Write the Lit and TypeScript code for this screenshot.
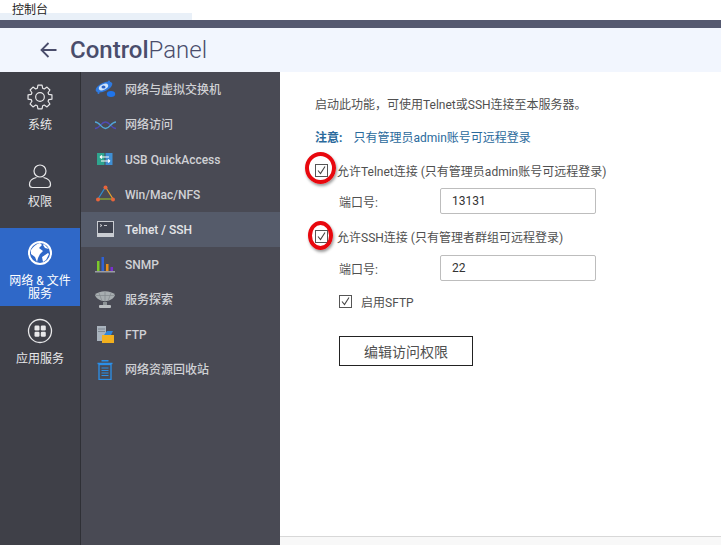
import { LitElement, html, css, svg } from "lit";
import { customElement } from "lit/decorators.js";

const menuIcons: Record<string, unknown> = {
  vswitch: svg`<ellipse cx="9" cy="7" rx="9" ry="4.200" fill="#2f7ae0" transform="rotate(-26 9 7)"/><ellipse cx="8.500" cy="7" rx="5" ry="2.800" fill="#cfe4fb" transform="rotate(-26 8.500 7)"/><ellipse cx="8.500" cy="7" rx="2" ry="1.500" fill="#2a62c8"/><circle cx="14" cy="1.500" r="1" fill="#2f7ae0"/><circle cx="3.500" cy="13" r="1" fill="#2f7ae0"/><ellipse cx="16" cy="14" rx="4.200" ry="3" fill="#1f74ea"/>`,
  access: svg`<path d="M0 13.500C5 13.500 6 7 10.500 7S16 13.500 21 13.500" fill="none" stroke="#4f4bb5" stroke-width="1.400"/><path d="M0 7C5 7 6 13.500 10.500 13.500S16 7 21 7" fill="none" stroke="#52a7d8" stroke-width="1.400"/>`,
  usb: svg`<rect x="2" y="3" width="7.500" height="12" fill="#2fa58f"/><rect x="10.500" y="3" width="7" height="12" fill="#3f8fd4"/><path d="M5 7h9M5 7l2-1.500M5 7l2 1.500M15 11H6M15 11l-2-1.500M15 11l-2 1.500" stroke="#fff" stroke-width="1.200" fill="none"/>`,
  nfs: svg`<path d="M10.500 2 3 14" stroke="#2f8fd0" stroke-width="1.200"/><path d="M10.500 2 18 14" stroke="#e8a02e" stroke-width="1.200"/><path d="M3 14H18" stroke="#8fb52f" stroke-width="1.200"/><circle cx="10.500" cy="2.500" r="2" fill="#e8643c"/><circle cx="3" cy="14.500" r="2" fill="#e8643c"/><circle cx="18" cy="14.500" r="2" fill="#e8643c"/>`,
  telnet: svg`<rect x="2.500" y="1.500" width="16" height="15" fill="#3f4350" stroke="#c9ccd2"/><rect x="2" y="13" width="17" height="4" fill="#c9ccd2"/><path d="M5 4.500 7 5.500 5 6.500M9 5.500h3" stroke="#e4e6ea" fill="none" stroke-width=".8"/>`,
  snmp: svg`<rect x="0" y="16" width="20" height="1.500" fill="#9a9ca3"/><rect x="2" y="6" width="2.500" height="10" fill="#7cc92c"/><rect x="6.500" y="2" width="2.500" height="14" fill="#2f62d8"/><rect x="11" y="9" width="2.500" height="7" fill="#e88f1a"/><rect x="15.500" y="12" width="2.500" height="4" fill="#7a2fd0"/>`,
  discovery: svg`<path d="M0 5C4 0 16 0 20 5 17 13 3 13 0 5Z" fill="#a7adb0"/><path d="M4 3 7 11M10 1.500V12M16 3 13 11M1 5.500H19" stroke="#82888c" stroke-width=".7"/><rect x="8" y="12" width="4" height="3" fill="#8d9396"/><rect x="4" y="15" width="12" height="3" rx="1" fill="#b9bdc0"/>`,
  ftp: svg`<rect x="2" y="1" width="9" height="15" fill="#a9b3bd"/><path d="M3 4h7M3 6.500h7" stroke="#78828c" stroke-width=".9"/><path d="M7 10H19V18H7Z" fill="#f2b01e"/><path d="M9 10 12 6h6l-2 4Z" fill="#2f86dc"/>`,
  recycle: svg`<path d="M6.500 .8h7M2.500 3.500h15" stroke="#2b8fe8" stroke-width="1.400" fill="none"/><rect x="4" y="4.500" width="12" height="15" fill="none" stroke="#2b8fe8" stroke-width="1.300"/><path d="M6.500 8h7M6.500 10.500h7M6.500 13h7M6.500 15.500h7" stroke="#2b8fe8"/>`,
};

const menu: [string, string, boolean?][] = [
  ["vswitch", "网络与虚拟交换机"],
  ["access", "网络访问"],
  ["usb", "USB QuickAccess"],
  ["nfs", "Win/Mac/NFS"],
  ["telnet", "Telnet / SSH", true],
  ["snmp", "SNMP"],
  ["discovery", "服务探索"],
  ["ftp", "FTP"],
  ["recycle", "网络资源回收站"],
];

const gearPath = (() => {
  const c = 12;
  const teeth = 8;
  const pts: string[] = [];
  for (let i = 0; i < teeth; i++) {
    const a = (i * 2 * Math.PI) / teeth;
    for (const [r, d] of [[8.4, -0.3], [11.2, -0.17], [11.2, 0.17], [8.4, 0.3]] as const) {
      pts.push(`${(c + r * Math.sin(a + d)).toFixed(2)} ${(c - r * Math.cos(a + d)).toFixed(2)}`);
    }
  }
  return `M${pts.join("L")}Z`;
})();

const check = html`<svg class="check" viewBox="0 0 13 13" width="13" height="13"><rect x=".5" y=".5" width="12" height="12" fill="#fff" stroke="#555"/><path d="M3 6.500 5.500 9.500 10 2.500" fill="none" stroke="#444" stroke-width="1.100"/></svg>`;

@customElement("app-root")
export class AppRoot extends LitElement {
  static styles = css`
    :host { display: block; width: 721px; height: 545px; overflow: hidden; position: relative; background: #fff;
      font-family: Roboto, "Noto Sans CJK SC", sans-serif; font-size: 12px; color: #505050; }
    .page { display: flex; flex-direction: column; height: 545px; }
    .tab { height: 20px; position: relative; background: #fff; color: #222; padding-left: 12px; line-height: 20px; font-size: 12px; }
    .tabstrip { position: absolute; left: 0; top: 13px; width: 192px; height: 7px; background: #e9f0f8; z-index: 0; }
    .tabtext { position: relative; z-index: 1; }
    .band { height: 8px; background: #555970; }
    .head { height: 44px; background: #f2f6fe; display: flex; align-items: center; padding-left: 40px; gap: 13px; color: #4a4d6c; font-size: 24px; }
    .head b { font-weight: 500; }
    .head span { font-weight: 300; }
    .main { flex: 1; display: flex; min-height: 0; }
    .rail { width: 80px; background: #3f4048; border-right: 1px solid #2f3036; color: #e8e8ea; display: flex; flex-direction: column; padding-top: 12px; }
    .ritem { display: flex; flex-direction: column; align-items: center; text-align: center; font-size: 12px; line-height: 13px; }
    .ritem svg { display: block; margin-bottom: 9px; }
    .r1 { height: 79px; }
    .r2 { height: 65px; }
    .r2 svg { margin-bottom: 7px; }
    .r3 { height: 78px; background: #2f68c8; color: #fff; padding-top: 12px; box-sizing: border-box; margin-bottom: 12px; }
    .r4 { height: 60px; }
    .list { width: 199px; background: #494a54; padding-top: 0; color: #d0d1d5; font-weight: 500; }
    .mi { height: 35px; display: flex; align-items: center; padding-left: 14px; gap: 9px; font-size: 12px; }
    .mi svg { width: 21px; height: 20px; flex: none; }
    .mi.on { background: #555b6a; color: #e4e5e8; }
    .cjk { margin-top: -2px; }
    .content { flex: 1; position: relative; display: flex; flex-direction: column; }
    .body { flex: 1; padding: 25px 0 0 35px; box-sizing: border-box; }
    .foot { height: 8px; background: #f8f8f8; border-top: 1px solid #d8d8d8; }
    .line { height: 17px; line-height: 17px; white-space: nowrap; }
    .note { color: #2a6a9c; margin-top: 16px; display: flex; gap: 11px; }
    .note b { font-weight: 700; }
    .cb { display: flex; align-items: center; height: 17px; white-space: nowrap; }
    .check { flex: none; }
    .t1 { margin-top: 15px; }
    .cb span { margin-left: 9px; margin-top: -1px; }
    .port { display: flex; align-items: center; margin: 9px 0 0 24px; height: 26px; }
    .port label { width: 101px; }
    .input { width: 156px; height: 26px; box-sizing: border-box; border: 1px solid #bdbdbd; border-radius: 2px; padding-left: 11px; line-height: 24px; color: #333; background: #fff; }
    .t2 { margin-top: 14px; }
    .p2 { margin-top: 10px; }
    .sftp { margin: 12px 0 0 24px; }
    .sftp span { margin-left: 9px; }
    .btn { margin: 26px 0 0 24px; width: 134px; height: 30px; box-sizing: border-box; border: 1px solid #222; display: flex; align-items: center; justify-content: center; font-size: 14px; color: #505050; background: #fff; }
    .ring { position: absolute; border: 4px solid #e8080e; border-radius: 50%; box-sizing: border-box; box-shadow: 1px 2px 3px rgba(0,0,0,.4); }
    .ring1 { left: 25px; top: 80px; width: 31px; height: 32px; }
    .ring2 { left: 28px; top: 149px; width: 25px; height: 29px; }
  `;

  render() {
    return html`<div class="page">
      <div class="tab"><div class="tabstrip"></div><span class="tabtext">控制台</span></div>
      <div class="band"></div>
      <div class="head">
        <svg width="17" height="16" viewBox="0 0 17 16"><path d="M16.500 8H1.500M8.500 1 1.500 8l7 7" fill="none" stroke="#4a4d6c" stroke-width="1.800"/></svg>
        <div><b>Control</b><span>Panel</span></div>
      </div>
      <div class="main">
        <div class="rail">
          <div class="ritem r1">
            <svg width="26" height="26" viewBox="0 0 24 24" fill="none" stroke="#e8e8ea" stroke-width="1.100" stroke-linejoin="round"><circle cx="12" cy="12" r="4"/><path d="${gearPath}"/></svg>
            系统
          </div>
          <div class="ritem r2">
            <svg width="24" height="26" viewBox="0 0 24 26" fill="none" stroke="#e8e8ea" stroke-width="1.200"><circle cx="12" cy="8" r="6"/><path d="M8.500 14.500C3.500 15.500 1.500 18 1.500 21.500c0 1.800 1 3 3 3h15c2 0 3-1.200 3-3 0-3.500-2-6-7-7"/></svg>
            权限
          </div>
          <div class="ritem r3">
            <svg width="26" height="26" viewBox="0 0 26 26"><circle cx="13" cy="13" r="11" fill="none" stroke="#fff" stroke-width="2"/><path d="M4 10C6 7 9 4 13 3l2 2-3 3 4 3-3 3-2 4-1 4-2-5-4-3ZM15 17l6-4 1 1-3 6-3 2ZM17 4l5 5-4-1-2-3Z" fill="#fff"/></svg>
            网络 & 文件<br />服务
          </div>
          <div class="ritem r4">
            <svg width="26" height="26" viewBox="0 0 26 26"><circle cx="13" cy="13" r="11.500" fill="none" stroke="#e8e8ea" stroke-width="1.300"/><rect x="7.500" y="7.500" width="5" height="5" rx="1.200" fill="#e8e8ea"/><rect x="13.800" y="7.500" width="5" height="5" rx="1.200" fill="#e8e8ea"/><rect x="7.500" y="13.800" width="5" height="5" rx="1.200" fill="#e8e8ea"/><rect x="13.800" y="13.800" width="5" height="5" rx="1.200" fill="#e8e8ea"/></svg>
            应用服务
          </div>
        </div>
        <div class="list">
          ${menu.map(([ic, label, on]) => html`<div class="mi ${on ? "on" : ""}"><svg viewBox="0 0 21 20">${menuIcons[ic]}</svg><span class="${/[^\x00-\x7f]/.test(label) ? "cjk" : ""}">${label}</span></div>`)}
        </div>
        <div class="content">
          <div class="body">
            <div class="line">启动此功能，可使用Telnet或SSH连接至本服务器。</div>
            <div class="line note"><b>注意:</b><span>只有管理员admin账号可远程登录</span></div>
            <div class="cb t1">${check}<span>允许Telnet连接 (只有管理员admin账号可远程登录)</span></div>
            <div class="port"><label>端口号:</label><div class="input">13131</div></div>
            <div class="cb t2">${check}<span>允许SSH连接 (只有管理者群组可远程登录)</span></div>
            <div class="port p2"><label>端口号:</label><div class="input">22</div></div>
            <div class="cb sftp">${check}<span>启用SFTP</span></div>
            <div class="btn">编辑访问权限</div>
          </div>
          <div class="foot"></div>
          <div class="ring ring1"></div>
          <div class="ring ring2"></div>
        </div>
      </div>
    </div>`;
  }
}
